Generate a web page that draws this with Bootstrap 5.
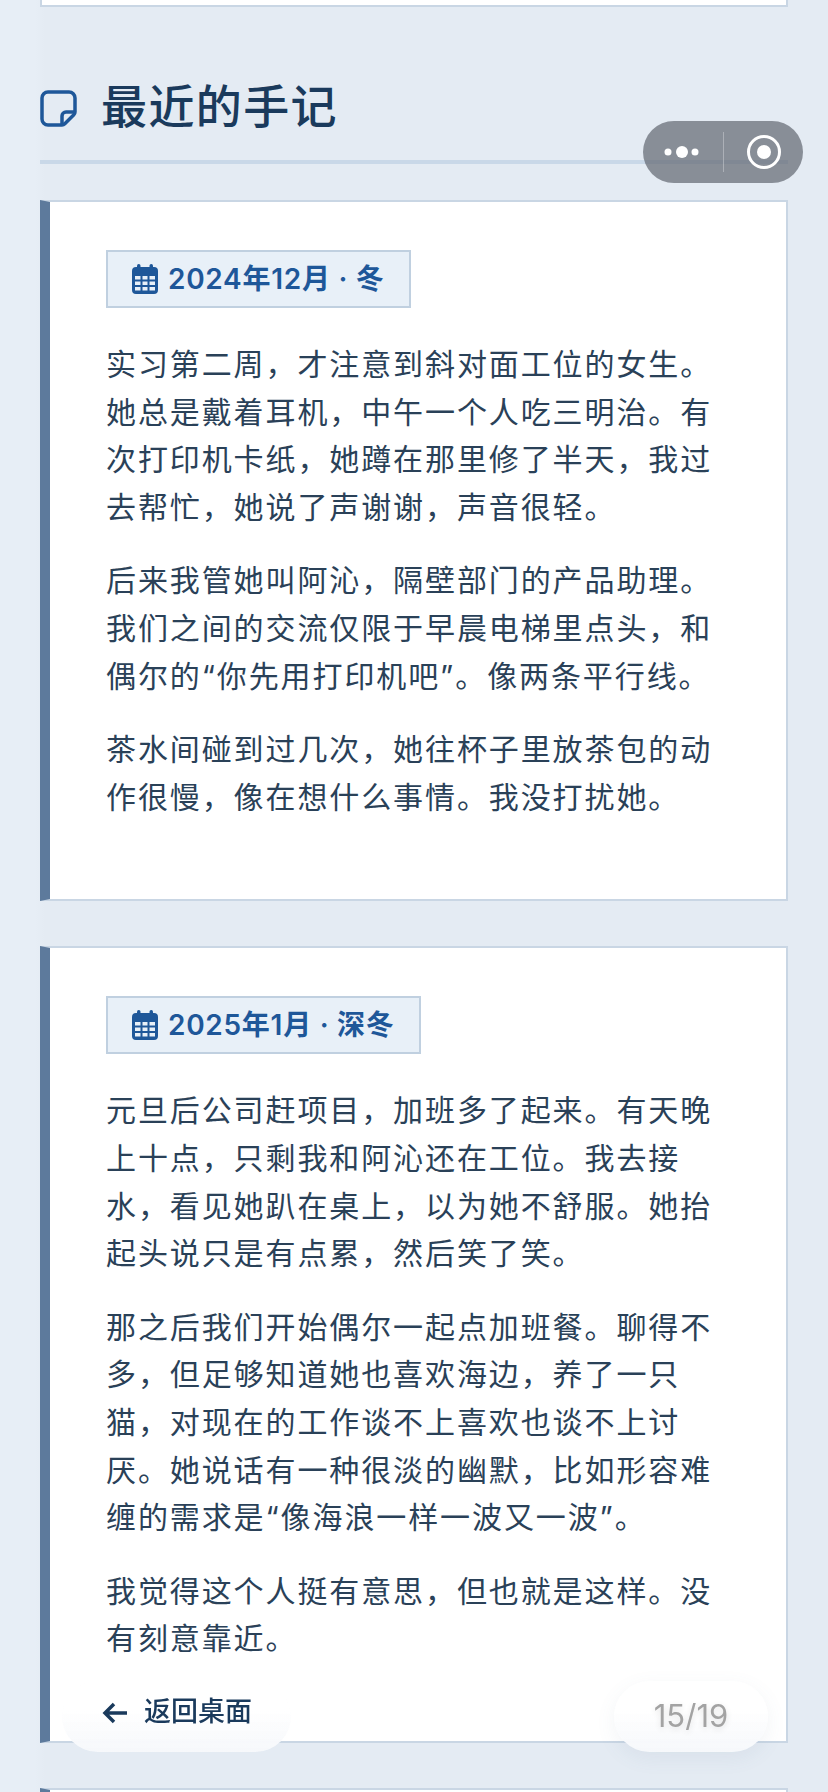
<!DOCTYPE html>
<html lang="zh-CN">
<head>
    <meta charset="UTF-8">
    <meta name="viewport" content="width=device-width, initial-scale=1.0">
    <title>最近的手记</title>
    <link href="https://cdn.jsdelivr.net/npm/bootstrap@5.3.0/dist/css/bootstrap.min.css" rel="stylesheet">
    <style>
        html, body {
            height: 1792px;
            overflow: hidden;
        }

        body {
            font-family: "Inter", "Noto Sans CJK SC", sans-serif;
            background: linear-gradient(90deg, #e7eef6 0, #e7eef6 36px, #e4ebf3 44px);
            color: #2a4158;
        }

        .page-wrap {
            padding: 0 40px 0 40px;
        }

        .top-stub {
            height: 7px;
            background: #fff;
            border: 2px solid #c9d6e4;
            border-top: 0;
        }

        .section-head {
            margin-top: 69px;
            height: 88px;
            border-bottom: 4px solid #c9d8e8;
            margin-bottom: 36px;
            gap: 24px;
        }

        .section-head svg {
            margin-top: 14px;
        }

        .section-head h2 {
            margin: 0;
            font-size: 46px;
            font-weight: 500;
            letter-spacing: 1.4px;
            line-height: 60px;
            color: #1a3a5c;
        }

        .note-card {
            background: #fff;
            border: 2px solid #c9d6e4;
            border-left: 10px solid #5d7a9c;
            border-radius: 0;
            padding: 48px 56px 78px 56px;
            margin-bottom: 45px;
        }

        .note-stub {
            height: 4px;
            padding: 0;
            margin: 0;
            border-bottom: 0;
        }

        .date-tag {
            height: 58px;
            padding: 0 24px;
            gap: 10px;
            background: #e8f0f8;
            border: 2px solid #c0d0e0;
            font-size: 28px;
            font-weight: 600;
            letter-spacing: 0.72px;
            color: #1e5799;
            margin-bottom: 33px;
        }

        .note-card p {
            font-size: 30px;
            line-height: 47.6px;
            letter-spacing: 1.9px;
            margin-bottom: 26px;
        }

        .note-card p:last-child {
            margin-bottom: 0;
        }

        .wx-capsule {
            position: fixed;
            left: 643px;
            top: 121px;
            width: 160px;
            height: 62px;
            border-radius: 31px;
            background: rgba(100, 105, 115, 0.72);
        }

        .wx-capsule i {
            position: absolute;
            left: 80px;
            top: 11px;
            width: 1px;
            height: 40px;
            background: rgba(255, 255, 255, 0.3);
        }

        .float-pill {
            position: fixed;
            top: 1681px;
            height: 71px;
            background: linear-gradient(180deg, rgba(255, 255, 255, 0.96) 40%, rgba(246, 248, 251, 0.98));
            border-radius: 36px;
        }

        .back-pill {
            left: 62px;
            width: 229px;
            padding: 0 0 8px 40px;
            gap: 16px;
            font-size: 27px;
            font-weight: 500;
            color: #1a3a5c;
        }

        .count-pill {
            left: 614px;
            width: 154px;
            font-size: 31px;
            color: #a3a3a3;
            text-shadow: 0 2px 6px rgba(0, 0, 0, 0.12);
            box-shadow: 0 6px 20px rgba(90, 110, 140, 0.08);
        }
    </style>
</head>

<body>
    <div class="page-wrap">
        <div class="top-stub"></div>

        <div class="section-head d-flex align-items-start">
            <svg width="37" height="37" viewBox="0 0 37 37" fill="none" class="flex-shrink-0">
                <path d="M8 2h21a6 6 0 0 1 6 6v14a4 4 0 0 1-1.200 2.800l-9 9A4 4 0 0 1 22 35H8a6 6 0 0 1-6-6V8a6 6 0 0 1 6-6z" stroke="#1e5799" stroke-width="3.500"/>
                <path d="M22 35v-9a4 4 0 0 1 4-4h9" stroke="#1e5799" stroke-width="3.500"/>
            </svg>
            <h2>最近的手记</h2>
        </div>

        <div class="note-card">
            <div class="date-tag d-inline-flex align-items-center">
                <svg width="26" height="30" viewBox="0 0 26 30" fill="#1e5799">
                    <rect x="5" y="0" width="3.500" height="6" rx="1.700"/>
                    <rect x="17.500" y="0" width="3.500" height="6" rx="1.700"/>
                    <path fill-rule="evenodd" d="M4 3h18a4 4 0 0 1 4 4v19a4 4 0 0 1-4 4H4a4 4 0 0 1-4-4V7a4 4 0 0 1 4-4zM3 12v3.500h5.500V12zM10.500 12v3.500h5V12zM17.500 12v3.500H23V12zM3 17.500V21h5.500v-3.500zM10.500 17.500V21h5v-3.500zM17.500 17.500V21H23v-3.500zM3 23v3.500h5.500V23zM10.500 23v3.500h5V23zM17.500 23v3.500H23V23z"/>
                </svg>
                2024年12月 · 冬
            </div>
            <p>实习第二周，才注意到斜对面工位的女生。她总是戴着耳机，中午一个人吃三明治。有次打印机卡纸，她蹲在那里修了半天，我过去帮忙，她说了声谢谢，声音很轻。</p>
            <p>后来我管她叫阿沁，隔壁部门的产品助理。我们之间的交流仅限于早晨电梯里点头，和偶尔的“你先用打印机吧”。像两条平行线。</p>
            <p>茶水间碰到过几次，她往杯子里放茶包的动作很慢，像在想什么事情。我没打扰她。</p>
        </div>

        <div class="note-card">
            <div class="date-tag d-inline-flex align-items-center">
                <svg width="26" height="30" viewBox="0 0 26 30" fill="#1e5799">
                    <rect x="5" y="0" width="3.500" height="6" rx="1.700"/>
                    <rect x="17.500" y="0" width="3.500" height="6" rx="1.700"/>
                    <path fill-rule="evenodd" d="M4 3h18a4 4 0 0 1 4 4v19a4 4 0 0 1-4 4H4a4 4 0 0 1-4-4V7a4 4 0 0 1 4-4zM3 12v3.500h5.500V12zM10.500 12v3.500h5V12zM17.500 12v3.500H23V12zM3 17.500V21h5.500v-3.500zM10.500 17.500V21h5v-3.500zM17.500 17.500V21H23v-3.500zM3 23v3.500h5.500V23zM10.500 23v3.500h5V23zM17.500 23v3.500H23V23z"/>
                </svg>
                2025年1月 · 深冬
            </div>
            <p>元旦后公司赶项目，加班多了起来。有天晚上十点，只剩我和阿沁还在工位。我去接水，看见她趴在桌上，以为她不舒服。她抬起头说只是有点累，然后笑了笑。</p>
            <p>那之后我们开始偶尔一起点加班餐。聊得不多，但足够知道她也喜欢海边，养了一只猫，对现在的工作谈不上喜欢也谈不上讨厌。她说话有一种很淡的幽默，比如形容难缠的需求是“像海浪一样一波又一波”。</p>
            <p>我觉得这个人挺有意思，但也就是这样。没有刻意靠近。</p>
        </div>

        <div class="note-card note-stub"></div>
    </div>

    <div class="wx-capsule">
        <svg width="160" height="62" viewBox="0 0 160 62" fill="#fff">
            <circle cx="25" cy="31" r="3.500"/>
            <circle cx="39" cy="31" r="6"/>
            <circle cx="52" cy="31" r="3.500"/>
            <circle cx="121" cy="31" r="15.500" fill="none" stroke="#fff" stroke-width="3"/>
            <circle cx="121" cy="31" r="7"/>
        </svg>
        <i></i>
    </div>

    <div class="float-pill back-pill d-flex align-items-center">
        <svg width="26" height="24" viewBox="0 0 26 24" fill="none" stroke="#1a3a5c" stroke-width="3.500">
            <path d="M25 12H3M12 3l-9 9 9 9"/>
        </svg>
        返回桌面
    </div>
    <div class="float-pill count-pill d-flex align-items-center justify-content-center">15/19</div>

    <script src="https://cdn.jsdelivr.net/npm/bootstrap@5.3.0/dist/js/bootstrap.bundle.min.js"></script>
</body>

</html>
